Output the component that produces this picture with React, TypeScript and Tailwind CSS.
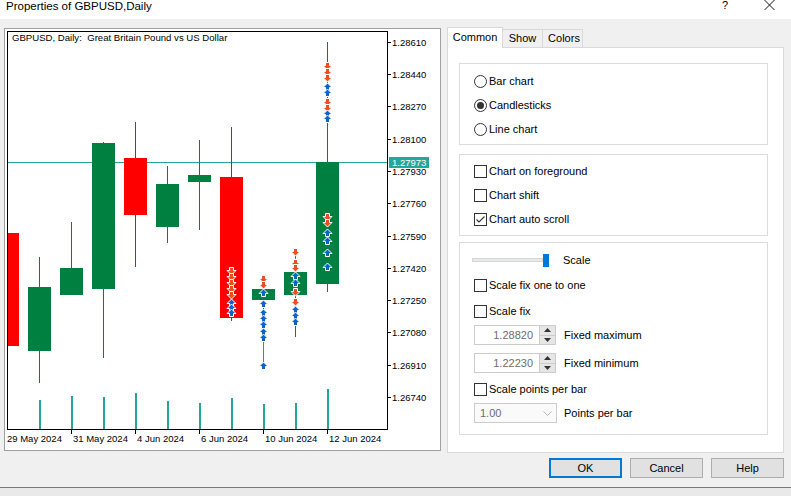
import React from "react";

const GREEN = "#008040";
const RED = "#ff0000";
const TEAL = "#26a69a";
const ORANGE = "#e8501e";
const BLUE = "#0d63c8";

type Candle = { c: number; up: boolean; bt: number; bb: number; wt: number; wb: number; v?: number };

const candles: Candle[] = [
  { c: 7, up: false, bt: 233, bb: 346, wt: 233, wb: 346 },
  { c: 39, up: true, bt: 287, bb: 351, wt: 257, wb: 383, v: 400 },
  { c: 71, up: true, bt: 268, bb: 295, wt: 222, wb: 295, v: 396 },
  { c: 103, up: true, bt: 143, bb: 289, wt: 142, wb: 358, v: 397 },
  { c: 135, up: false, bt: 158, bb: 215, wt: 122, wb: 267, v: 393 },
  { c: 167, up: true, bt: 184, bb: 227, wt: 166, wb: 243, v: 401 },
  { c: 199, up: true, bt: 175, bb: 182, wt: 140, wb: 230, v: 403 },
  { c: 231, up: false, bt: 177, bb: 318, wt: 127, wb: 321, v: 398 },
  { c: 263, up: true, bt: 289, bb: 300, wt: 277, wb: 370, v: 404 },
  { c: 295, up: true, bt: 272, bb: 295, wt: 250, wb: 337, v: 403 },
  { c: 327, up: true, bt: 162, bb: 284, wt: 42, wb: 292, v: 389 },
];

const prices = [
  "1.28610", "1.28440", "1.28270", "1.28100", "1.27930", "1.27760",
  "1.27590", "1.27420", "1.27250", "1.27080", "1.26910", "1.26740",
];

const dates: [number, string][] = [
  [71, "31 May 2024"],
  [135, "4 Jun 2024"],
  [199, "6 Jun 2024"],
  [263, "10 Jun 2024"],
  [327, "12 Jun 2024"],
];

type M = { y: number; t: "d" | "u" };
const markers: { c: number; list: M[]; lines: [number, number, string, boolean][] }[] = [
  {
    c: 231,
    list: [
      { y: 271, t: "d" }, { y: 277, t: "d" }, { y: 283, t: "d" }, { y: 289, t: "d" }, { y: 295, t: "d" },
      { y: 303, t: "u" }, { y: 308, t: "u" }, { y: 313, t: "u" },
    ],
    lines: [[267, 300, ORANGE, true], [300, 317, BLUE, true]],
  },
  {
    c: 263,
    list: [
      { y: 279, t: "d" }, { y: 285, t: "d" }, { y: 293, t: "u" },
      { y: 304, t: "u" }, { y: 313, t: "u" }, { y: 319, t: "u" }, { y: 325, t: "u" }, { y: 332, t: "u" }, { y: 338, t: "u" },
      { y: 366, t: "u" },
    ],
    lines: [[276, 296, ORANGE, true], [296, 341, BLUE, true], [341, 363, ORANGE, false]],
  },
  {
    c: 295,
    list: [
      { y: 252, t: "d" }, { y: 263, t: "d" }, { y: 268, t: "d" }, { y: 276, t: "u" }, { y: 283, t: "u" },
      { y: 292, t: "d" }, { y: 302, t: "d" }, { y: 310, t: "u" }, { y: 316, t: "u" }, { y: 322, t: "u" },
    ],
    lines: [[250, 272, ORANGE, true], [272, 290, BLUE, true], [290, 306, ORANGE, true], [306, 325, BLUE, true]],
  },
  {
    c: 327,
    list: [
      { y: 66, t: "d" }, { y: 72, t: "d" }, { y: 78, t: "d" }, { y: 87, t: "u" }, { y: 93, t: "u" },
      { y: 102, t: "d" }, { y: 108, t: "d" }, { y: 114, t: "u" }, { y: 119, t: "u" },
      { y: 217, t: "d" }, { y: 223, t: "d" }, { y: 233, t: "u" }, { y: 241, t: "u" }, { y: 253, t: "u" }, { y: 267, t: "u" },
    ],
    lines: [[64, 84, ORANGE, true], [84, 98, BLUE, true], [98, 111, ORANGE, true], [111, 121, BLUE, true], [214, 228, ORANGE, true], [228, 270, BLUE, true]],
  },
];

function Arrow({ cx, y, t }: { cx: number; y: number; t: "d" | "u" }) {
  const pts =
    t === "d"
      ? [[cx - 2, y - 3.5], [cx + 2, y - 3.5], [cx + 2, y - 0.5], [cx + 4.5, y - 0.5], [cx, y + 4], [cx - 4.5, y - 0.5], [cx - 2, y - 0.5]]
      : [[cx - 2, y + 3.5], [cx + 2, y + 3.5], [cx + 2, y + 0.5], [cx + 4.5, y + 0.5], [cx, y - 4], [cx - 4.5, y + 0.5], [cx - 2, y + 0.5]];
  return (
    <polygon
      points={pts.map((p) => p.join(",")).join(" ")}
      fill={t === "d" ? ORANGE : BLUE}
      stroke="white"
      strokeWidth={1}
      strokeLinejoin="round"
    />
  );
}

function Chart() {
  const chartFont = '"Liberation Sans", Arial, sans-serif';
  return (
    <svg width={435} height={421} viewBox="5 29 435 421" className="block">
      <defs>
        <clipPath id="plot">
          <rect x={8} y={32} width={379} height={397} />
        </clipPath>
      </defs>
      <g clipPath="url(#plot)">
        <line x1={8} x2={387} y1={162.5} y2={162.5} stroke={TEAL} strokeWidth={1} />
        {candles.map((k, i) => (
          <g key={i}>
            {k.v !== undefined && <rect x={k.c} y={k.v} width={2} height={429 - k.v} fill={TEAL} />}
            <line x1={k.c + 0.5} x2={k.c + 0.5} y1={k.wt} y2={k.wb} stroke={k.up ? GREEN : RED} strokeWidth={1} />
            <rect x={k.c - 11} y={k.bt} width={23} height={k.bb - k.bt} fill={k.up ? GREEN : RED} />
          </g>
        ))}
        {markers.map((m, i) => (
          <g key={i}>
            {m.lines.map(([a, b, col, dash], j) => (
              <line
                key={j}
                x1={m.c + 0.5}
                x2={m.c + 0.5}
                y1={a}
                y2={b}
                stroke={col}
                strokeWidth={1}
                strokeDasharray={dash ? "1 1" : undefined}
              />
            ))}
            {m.list.map((a, j) => (
              <Arrow key={j} cx={m.c + 0.5} y={a.y} t={a.t} />
            ))}
          </g>
        ))}
      </g>
      <rect x={7.5} y={31.5} width={380} height={398} fill="none" stroke="black" strokeWidth={1} />
      <text x={12} y={41} fontSize={9.6} fontFamily={chartFont} fill="black" style={{ whiteSpace: "pre" }}>
        {"GBPUSD, Daily:  Great Britain Pound vs US Dollar"}
      </text>
      {prices.map((p, i) => {
        const y = Math.round(41.7 + i * 32.3);
        return (
          <g key={p}>
            <line x1={387} x2={391} y1={y + 0.5} y2={y + 0.5} stroke="black" strokeWidth={1} />
            <text x={392} y={y + 4} fontSize={9.5} fontFamily={chartFont} fill="black">
              {p}
            </text>
          </g>
        );
      })}
      <rect x={389} y={157} width={40} height={11} fill={TEAL} />
      <text x={392} y={166} fontSize={9.5} fontFamily={chartFont} fill="white">
        1.27973
      </text>
      <text x={7} y={442} fontSize={9.5} fontFamily={chartFont} fill="black">
        29 May 2024
      </text>
      {dates.map(([c, d]) => (
        <g key={d}>
          <line x1={c + 0.5} x2={c + 0.5} y1={429} y2={434} stroke="black" strokeWidth={1} />
          <text x={c + 2} y={442} fontSize={9.5} fontFamily={chartFont} fill="black">
            {d}
          </text>
        </g>
      ))}
    </svg>
  );
}

function Radio({ checked }: { checked?: boolean }) {
  return (
    <span className="w-[13px] h-[13px] rounded-full border border-[#333333] bg-white flex items-center justify-center shrink-0">
      {checked && <span className="w-[7px] h-[7px] rounded-full bg-[#333333]" />}
    </span>
  );
}

function Check({ checked }: { checked?: boolean }) {
  return (
    <span className="w-[13px] h-[13px] border border-[#333333] bg-white flex items-center justify-center shrink-0">
      {checked && (
        <svg width={11} height={11} viewBox="0 0 11 11">
          <path d="M1.5 5.5 L4 8 L9.5 2.5" fill="none" stroke="#333333" strokeWidth={1.1} />
        </svg>
      )}
    </span>
  );
}

function Row({ children, h = "h-[24px]" }: { children: React.ReactNode; h?: string }) {
  return <div className={`flex items-center gap-[2px] ${h}`}>{children}</div>;
}

function Spin({ value, label }: { value: string; label: string }) {
  return (
    <div className="flex items-center h-[20px]">
      <div className="w-[66px] h-[20px] border border-[#cccccc] bg-white text-[#6d6d6d] text-right pr-[6px] leading-[18px]">
        {value}
      </div>
      <div className="w-[16px] h-[20px] border border-[#cccccc] border-l-0 bg-[#e6e6e6] flex flex-col">
        <div className="flex-1 flex items-center justify-center border-b border-[#cccccc]">
          <svg width={7} height={4} viewBox="0 0 7 4">
            <path d="M0 4 L3.5 0 L7 4 Z" fill="#333333" />
          </svg>
        </div>
        <div className="flex-1 flex items-center justify-center">
          <svg width={7} height={4} viewBox="0 0 7 4">
            <path d="M0 0 L3.5 4 L7 0 Z" fill="#333333" />
          </svg>
        </div>
      </div>
      <span className="ml-[8px]">{label}</span>
    </div>
  );
}

export default function App() {
  return (
    <div
      className="w-[791px] h-[496px] bg-[#e9e9e9] overflow-hidden text-[11px] text-black"
      style={{ fontFamily: '"Liberation Sans", Arial, sans-serif' }}
    >
      <div className="h-[488px] bg-[#f0f0f0] border-b border-[#7a7a7a] flex flex-col">
        {/* title bar */}
        <div className="h-[19px] bg-white flex items-start relative">
          <span className="pl-[6px] text-[11.5px] leading-[13px]">Properties of GBPUSD,Daily</span>
          <div className="ml-auto flex items-start pr-[16px] gap-[36px]">
            <span className="text-[11px] leading-[11px]">?</span>
            <svg width={11} height={10} viewBox="0 0 11 10" className="mt-[0px]">
              <path d="M0.5 0 L10.5 10 M10.5 0 L0.5 10" stroke="#111" strokeWidth={1} />
            </svg>
          </div>
        </div>

        {/* body */}
        <div className="flex items-start pl-[4px] pt-[8px]">
          <div className="mt-[1px] w-[437px] h-[423px] border border-[#a0a0a0] bg-white">
            <Chart />
          </div>

          <div className="ml-[6px] w-[337px] flex flex-col">
            {/* tabs */}
            <div className="flex items-end h-[20px]">
              <div className="relative z-10 h-[21px] -mb-px w-[56px] bg-white border border-b-0 border-[#d9d9d9] flex items-center justify-center pb-[1px]">
                Common
              </div>
              <div className="h-[18px] w-[40px] bg-[#f0f0f0] border border-b-0 border-l-0 border-[#d9d9d9] flex items-center justify-center">
                Show
              </div>
              <div className="h-[18px] w-[40px] bg-[#f0f0f0] border border-b-0 border-l-0 border-[#d9d9d9] flex items-center justify-center pl-[3px]">
                Colors
              </div>
            </div>
            <div className="h-[406px] border border-[#d9d9d9] bg-white pl-[11px] pt-[15px] flex flex-col">
              {/* group 1 */}
              <div className="w-[309px] h-[82px] border border-[#dcdcdc] pl-[14px] pt-[5px] flex flex-col">
                <Row><Radio /><span>Bar chart</span></Row>
                <Row><Radio checked /><span>Candlesticks</span></Row>
                <Row><Radio /><span>Line chart</span></Row>
              </div>
              {/* group 2 */}
              <div className="mt-[9px] w-[309px] h-[82px] border border-[#dcdcdc] pl-[14px] pt-[4px] flex flex-col">
                <Row><Check /><span>Chart on foreground</span></Row>
                <Row><Check /><span>Chart shift</span></Row>
                <Row><Check checked /><span>Chart auto scroll</span></Row>
              </div>
              {/* group 3 */}
              <div className="mt-[6px] w-[309px] h-[193px] border border-[#dcdcdc] pl-[14px] flex flex-col">
                <div className="mt-[10px] h-[14px] flex items-center -ml-[2px]">
                  <div className="w-[71px] h-[4px] bg-[#e7eaea] border border-[#d6d6d6]" />
                  <div className="w-[6px] h-[13px] bg-[#0078d7]" />
                  <span className="ml-[14px]">Scale</span>
                </div>
                <div className="mt-[10px]">
                  <Row h="h-[16px]"><Check /><span>Scale fix one to one</span></Row>
                </div>
                <div className="mt-[10px]">
                  <Row h="h-[16px]"><Check /><span>Scale fix</span></Row>
                </div>
                <div className="mt-[6px]">
                  <Spin value="1.28820" label="Fixed maximum" />
                </div>
                <div className="mt-[8px]">
                  <Spin value="1.22230" label="Fixed minimum" />
                </div>
                <div className="mt-[8px]">
                  <Row h="h-[16px]"><Check /><span>Scale points per bar</span></Row>
                </div>
                <div className="mt-[6px] flex items-center h-[20px]">
                  <div className="w-[83px] h-[20px] border border-[#cccccc] bg-[#fafafa] flex items-center pl-[5px] pr-[4px] text-[#6d6d6d]">
                    <span>1.00</span>
                    <svg width={9} height={5} viewBox="0 0 9 5" className="ml-auto">
                      <path d="M0.5 0.5 L4.5 4.5 L8.5 0.5" fill="none" stroke="#b0b0b0" strokeWidth={1} />
                    </svg>
                  </div>
                  <span className="ml-[7px]">Points per bar</span>
                </div>
              </div>
            </div>
          </div>
        </div>

        {/* buttons */}
        <div className="mt-[5px] flex justify-end pr-[7px] gap-[8px]">
          <button className="w-[73px] h-[20px] bg-[#e1e1e1] border-2 border-[#0078d7] flex items-center justify-center">
            OK
          </button>
          <button className="w-[73px] h-[20px] bg-[#e1e1e1] border border-[#adadad] flex items-center justify-center">
            Cancel
          </button>
          <button className="w-[73px] h-[20px] bg-[#e1e1e1] border border-[#adadad] flex items-center justify-center">
            Help
          </button>
        </div>
      </div>
    </div>
  );
}
